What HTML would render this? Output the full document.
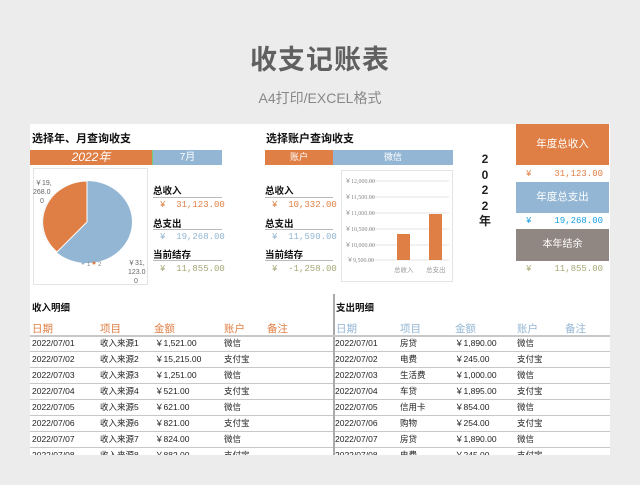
<!DOCTYPE html>
<html><head><meta charset="utf-8"><style>
*{margin:0;padding:0;box-sizing:border-box}
body{width:640px;height:485px;background:#ececec;font-family:"Liberation Sans","Noto Sans CJK SC",sans-serif;position:relative;overflow:hidden;color:#222}
.a{position:absolute;white-space:nowrap}
.b{font-weight:bold;font-size:11px;color:#111}
.lbl{font-weight:bold;font-size:9.5px;color:#111}
.ln{position:absolute;height:1px;background:#bbb}
.v{position:absolute;font-size:9px;font-family:"Liberation Mono","Noto Sans CJK SC",monospace}
.row{position:absolute;height:16px;border-bottom:1.5px solid #c8c8c8;font-size:8.5px;line-height:15px;color:#222}
.row span{position:absolute;top:0}
.hd{position:absolute;font-size:10.5px}
</style></head><body>
<div class="a" style="left:0;width:640px;top:38px;text-align:center;font-size:27px;color:#606060;font-weight:bold;letter-spacing:1px">收支记账表</div>
<div class="a" style="left:0;width:640px;top:88px;text-align:center;font-size:14px;color:#888">A4打印/EXCEL格式</div>
<div class="a" style="left:30px;top:124px;width:580px;height:331px;background:#fff"></div>

<div class="a b" style="left:32px;top:130px">选择年、月查询收支</div>
<div class="a" style="left:30px;top:150px;width:122px;height:15px;background:#e07f45;color:#fff;font-size:12px;font-style:italic;text-align:center;line-height:15px">2022年</div>
<div class="a" style="left:152px;top:150px;width:70px;height:15px;background:#93b6d4;color:#fff;font-size:10px;text-align:center;line-height:15px;border-left:1px solid #7c7">7月</div>
<div class="a" style="left:33px;top:168px;width:115px;height:117px;border:1px solid #e4e4e4"></div>
<svg class="a" style="left:30px;top:165px" width="120" height="125">
<ellipse cx="57" cy="57" rx="45" ry="41" fill="#93b6d4"/>
<path d="M57 57 L57 16 A45 41 0 0 0 27 87 Z" fill="#e07f45" stroke="#fff" stroke-width="1"/>
<text x="5" y="20" font-size="7" fill="#666">￥19,</text>
<text x="3" y="29" font-size="7" fill="#666">268.0</text>
<text x="10" y="38" font-size="7" fill="#666">0</text>
<text x="98" y="100" font-size="7" fill="#666">￥31,</text>
<text x="98" y="109" font-size="7" fill="#666">123.0</text>
<text x="104" y="118" font-size="7" fill="#666">0</text>
<circle cx="53" cy="98" r="1.5" fill="#93b6d4"/><text x="57" y="101" font-size="6" fill="#888">1</text>
<circle cx="64" cy="98" r="1.5" fill="#e07f45"/><text x="68" y="101" font-size="6" fill="#888">2</text>
</svg>

<div class="a lbl" style="left:153px;top:183px">总收入</div><div class="ln" style="left:153px;top:197px;width:69px"></div>
<div class="v" style="left:160px;top:200px;color:#e07f45">¥ &nbsp;31,123.00</div>
<div class="a lbl" style="left:153px;top:216px">总支出</div><div class="ln" style="left:153px;top:229px;width:69px"></div>
<div class="v" style="left:160px;top:232px;color:#93b6d4">¥ &nbsp;19,268.00</div>
<div class="a lbl" style="left:153px;top:247px">当前结存</div><div class="ln" style="left:153px;top:260px;width:69px"></div>
<div class="v" style="left:160px;top:264px;color:#a8a878">¥ &nbsp;11,855.00</div>

<div class="a b" style="left:266px;top:130px">选择账户查询收支</div>
<div class="a" style="left:265px;top:150px;width:68px;height:15px;background:#e07f45;color:#fff;font-size:9px;text-align:center;line-height:15px">账户</div>
<div class="a" style="left:333px;top:150px;width:120px;height:15px;background:#93b6d4;color:#fff;font-size:9px;text-align:center;line-height:15px">微信</div>
<div class="a lbl" style="left:265px;top:183px">总收入</div><div class="ln" style="left:265px;top:197px;width:68px"></div>
<div class="v" style="left:272px;top:200px;color:#e07f45">¥ &nbsp;10,332.00</div>
<div class="a lbl" style="left:265px;top:216px">总支出</div><div class="ln" style="left:265px;top:229px;width:68px"></div>
<div class="v" style="left:272px;top:232px;color:#93b6d4">¥ &nbsp;11,590.00</div>
<div class="a lbl" style="left:265px;top:247px">当前结存</div><div class="ln" style="left:265px;top:260px;width:68px"></div>
<div class="v" style="left:272px;top:264px;color:#a8a878">¥ &nbsp;-1,258.00</div>

<svg class="a" style="left:341px;top:170px" width="112" height="112">
<rect x="0.5" y="0.5" width="111" height="111" fill="#fff" stroke="#e4e4e4"/>
<g stroke="#e6e6e6"><line x1="28" y1="11" x2="108" y2="11"/><line x1="28" y1="27" x2="108" y2="27"/><line x1="28" y1="43" x2="108" y2="43"/><line x1="28" y1="59" x2="108" y2="59"/><line x1="28" y1="75" x2="108" y2="75"/><line x1="28" y1="90" x2="108" y2="90"/></g>
<g font-size="6" fill="#888" font-family="Liberation Serif,serif"><text x="4" y="13">￥12,000.00</text><text x="4" y="29">￥11,500.00</text><text x="4" y="45">￥11,000.00</text><text x="4" y="61">￥10,500.00</text><text x="4" y="77">￥10,000.00</text><text x="6" y="92">￥9,500.00</text></g>
<rect x="56" y="64" width="13" height="26" fill="#e07f45"/>
<rect x="88" y="44" width="13" height="46" fill="#e07f45"/>
<text x="53" y="102" font-size="6.5" fill="#999">总收入</text><text x="85" y="102" font-size="6.5" fill="#999">总支出</text>
</svg>

<div class="a" style="left:478px;top:152px;width:14px;font-size:12px;font-weight:bold;line-height:15.5px;text-align:center;white-space:normal">2 0 2 2 年</div>

<div class="a" style="left:516px;top:124px;width:93px;height:41px;background:#e07f45;color:#fff;font-size:10.5px;text-align:center;line-height:41px">年度总收入</div>
<div class="v" style="left:526px;top:169px;color:#e07f45">¥</div><div class="v" style="left:549px;top:169px;width:54px;text-align:right;color:#e07f45">31,123.00</div>
<div class="a" style="left:516px;top:182px;width:93px;height:31px;background:#93b6d4;color:#fff;font-size:10.5px;text-align:center;line-height:31px">年度总支出</div>
<div class="v" style="left:526px;top:216px;color:#1aa0e0">¥</div><div class="v" style="left:549px;top:216px;width:54px;text-align:right;color:#1aa0e0">19,268.00</div>
<div class="a" style="left:516px;top:229px;width:93px;height:32px;background:#908682;color:#fff;font-size:10px;text-align:center;line-height:32px">本年结余</div>
<div class="v" style="left:526px;top:264px;color:#a8a878">¥</div><div class="v" style="left:549px;top:264px;width:54px;text-align:right;color:#a8a878">11,855.00</div>

<div class="a" style="left:30px;top:292px;width:580px;height:163px;overflow:hidden">
<div class="a" style="left:303px;top:2px;width:1.5px;height:161px;background:#aaa"></div>
<div class="a lbl" style="left:2px;top:8px">收入明细</div>
<div class="a lbl" style="left:306px;top:8px">支出明细</div>
<div class="hd" style="left:2px;top:29px;color:#e07f45">日期</div><div class="hd" style="left:70px;top:29px;color:#e07f45">项目</div><div class="hd" style="left:124px;top:29px;color:#e07f45">金额</div><div class="hd" style="left:194px;top:29px;color:#e07f45">账户</div><div class="hd" style="left:237px;top:29px;color:#e07f45">备注</div>
<div class="hd" style="left:306px;top:29px;color:#93b6d4">日期</div><div class="hd" style="left:370px;top:29px;color:#93b6d4">项目</div><div class="hd" style="left:425px;top:29px;color:#93b6d4">金额</div><div class="hd" style="left:487px;top:29px;color:#93b6d4">账户</div><div class="hd" style="left:535px;top:29px;color:#93b6d4">备注</div>
<div class="a" style="left:0;top:43px;width:580px;height:1.5px;background:#c8c8c8"></div>
<div id="t"></div>
</div>
<div class="a" style="left:30px;top:336px;width:580px">
<div class="row" style="left:0;top:0;width:303px"><span style="left:2px">2022/07/01</span><span style="left:70px">收入来源1</span><span style="left:125px">￥1,521.00</span><span style="left:194px">微信</span></div>
<div class="row" style="left:0;top:16px;width:303px"><span style="left:2px">2022/07/02</span><span style="left:70px">收入来源2</span><span style="left:125px">￥15,215.00</span><span style="left:194px">支付宝</span></div>
<div class="row" style="left:0;top:32px;width:303px"><span style="left:2px">2022/07/03</span><span style="left:70px">收入来源3</span><span style="left:125px">￥1,251.00</span><span style="left:194px">微信</span></div>
<div class="row" style="left:0;top:48px;width:303px"><span style="left:2px">2022/07/04</span><span style="left:70px">收入来源4</span><span style="left:125px">￥521.00</span><span style="left:194px">支付宝</span></div>
<div class="row" style="left:0;top:64px;width:303px"><span style="left:2px">2022/07/05</span><span style="left:70px">收入来源5</span><span style="left:125px">￥621.00</span><span style="left:194px">微信</span></div>
<div class="row" style="left:0;top:80px;width:303px"><span style="left:2px">2022/07/06</span><span style="left:70px">收入来源6</span><span style="left:125px">￥821.00</span><span style="left:194px">支付宝</span></div>
<div class="row" style="left:0;top:96px;width:303px"><span style="left:2px">2022/07/07</span><span style="left:70px">收入来源7</span><span style="left:125px">￥824.00</span><span style="left:194px">微信</span></div>
<div class="row" style="left:0;top:112px;width:303px;height:7px;overflow:hidden;border:0"><span style="left:2px">2022/07/08</span><span style="left:70px">收入来源8</span><span style="left:125px">￥882.00</span><span style="left:194px">支付宝</span></div>
<div class="row" style="left:305px;top:0;width:275px"><span style="left:0">2022/07/01</span><span style="left:65px">房贷</span><span style="left:120px">￥1,890.00</span><span style="left:182px">微信</span></div>
<div class="row" style="left:305px;top:16px;width:275px"><span style="left:0">2022/07/02</span><span style="left:65px">电费</span><span style="left:120px">￥245.00</span><span style="left:182px">支付宝</span></div>
<div class="row" style="left:305px;top:32px;width:275px"><span style="left:0">2022/07/03</span><span style="left:65px">生活费</span><span style="left:120px">￥1,000.00</span><span style="left:182px">微信</span></div>
<div class="row" style="left:305px;top:48px;width:275px"><span style="left:0">2022/07/04</span><span style="left:65px">车贷</span><span style="left:120px">￥1,895.00</span><span style="left:182px">支付宝</span></div>
<div class="row" style="left:305px;top:64px;width:275px"><span style="left:0">2022/07/05</span><span style="left:65px">信用卡</span><span style="left:120px">￥854.00</span><span style="left:182px">微信</span></div>
<div class="row" style="left:305px;top:80px;width:275px"><span style="left:0">2022/07/06</span><span style="left:65px">购物</span><span style="left:120px">￥254.00</span><span style="left:182px">支付宝</span></div>
<div class="row" style="left:305px;top:96px;width:275px"><span style="left:0">2022/07/07</span><span style="left:65px">房贷</span><span style="left:120px">￥1,890.00</span><span style="left:182px">微信</span></div>
<div class="row" style="left:305px;top:112px;width:275px;height:7px;overflow:hidden;border:0"><span style="left:0">2022/07/08</span><span style="left:65px">电费</span><span style="left:120px">￥245.00</span><span style="left:182px">支付宝</span></div>
</div>
</body></html>
